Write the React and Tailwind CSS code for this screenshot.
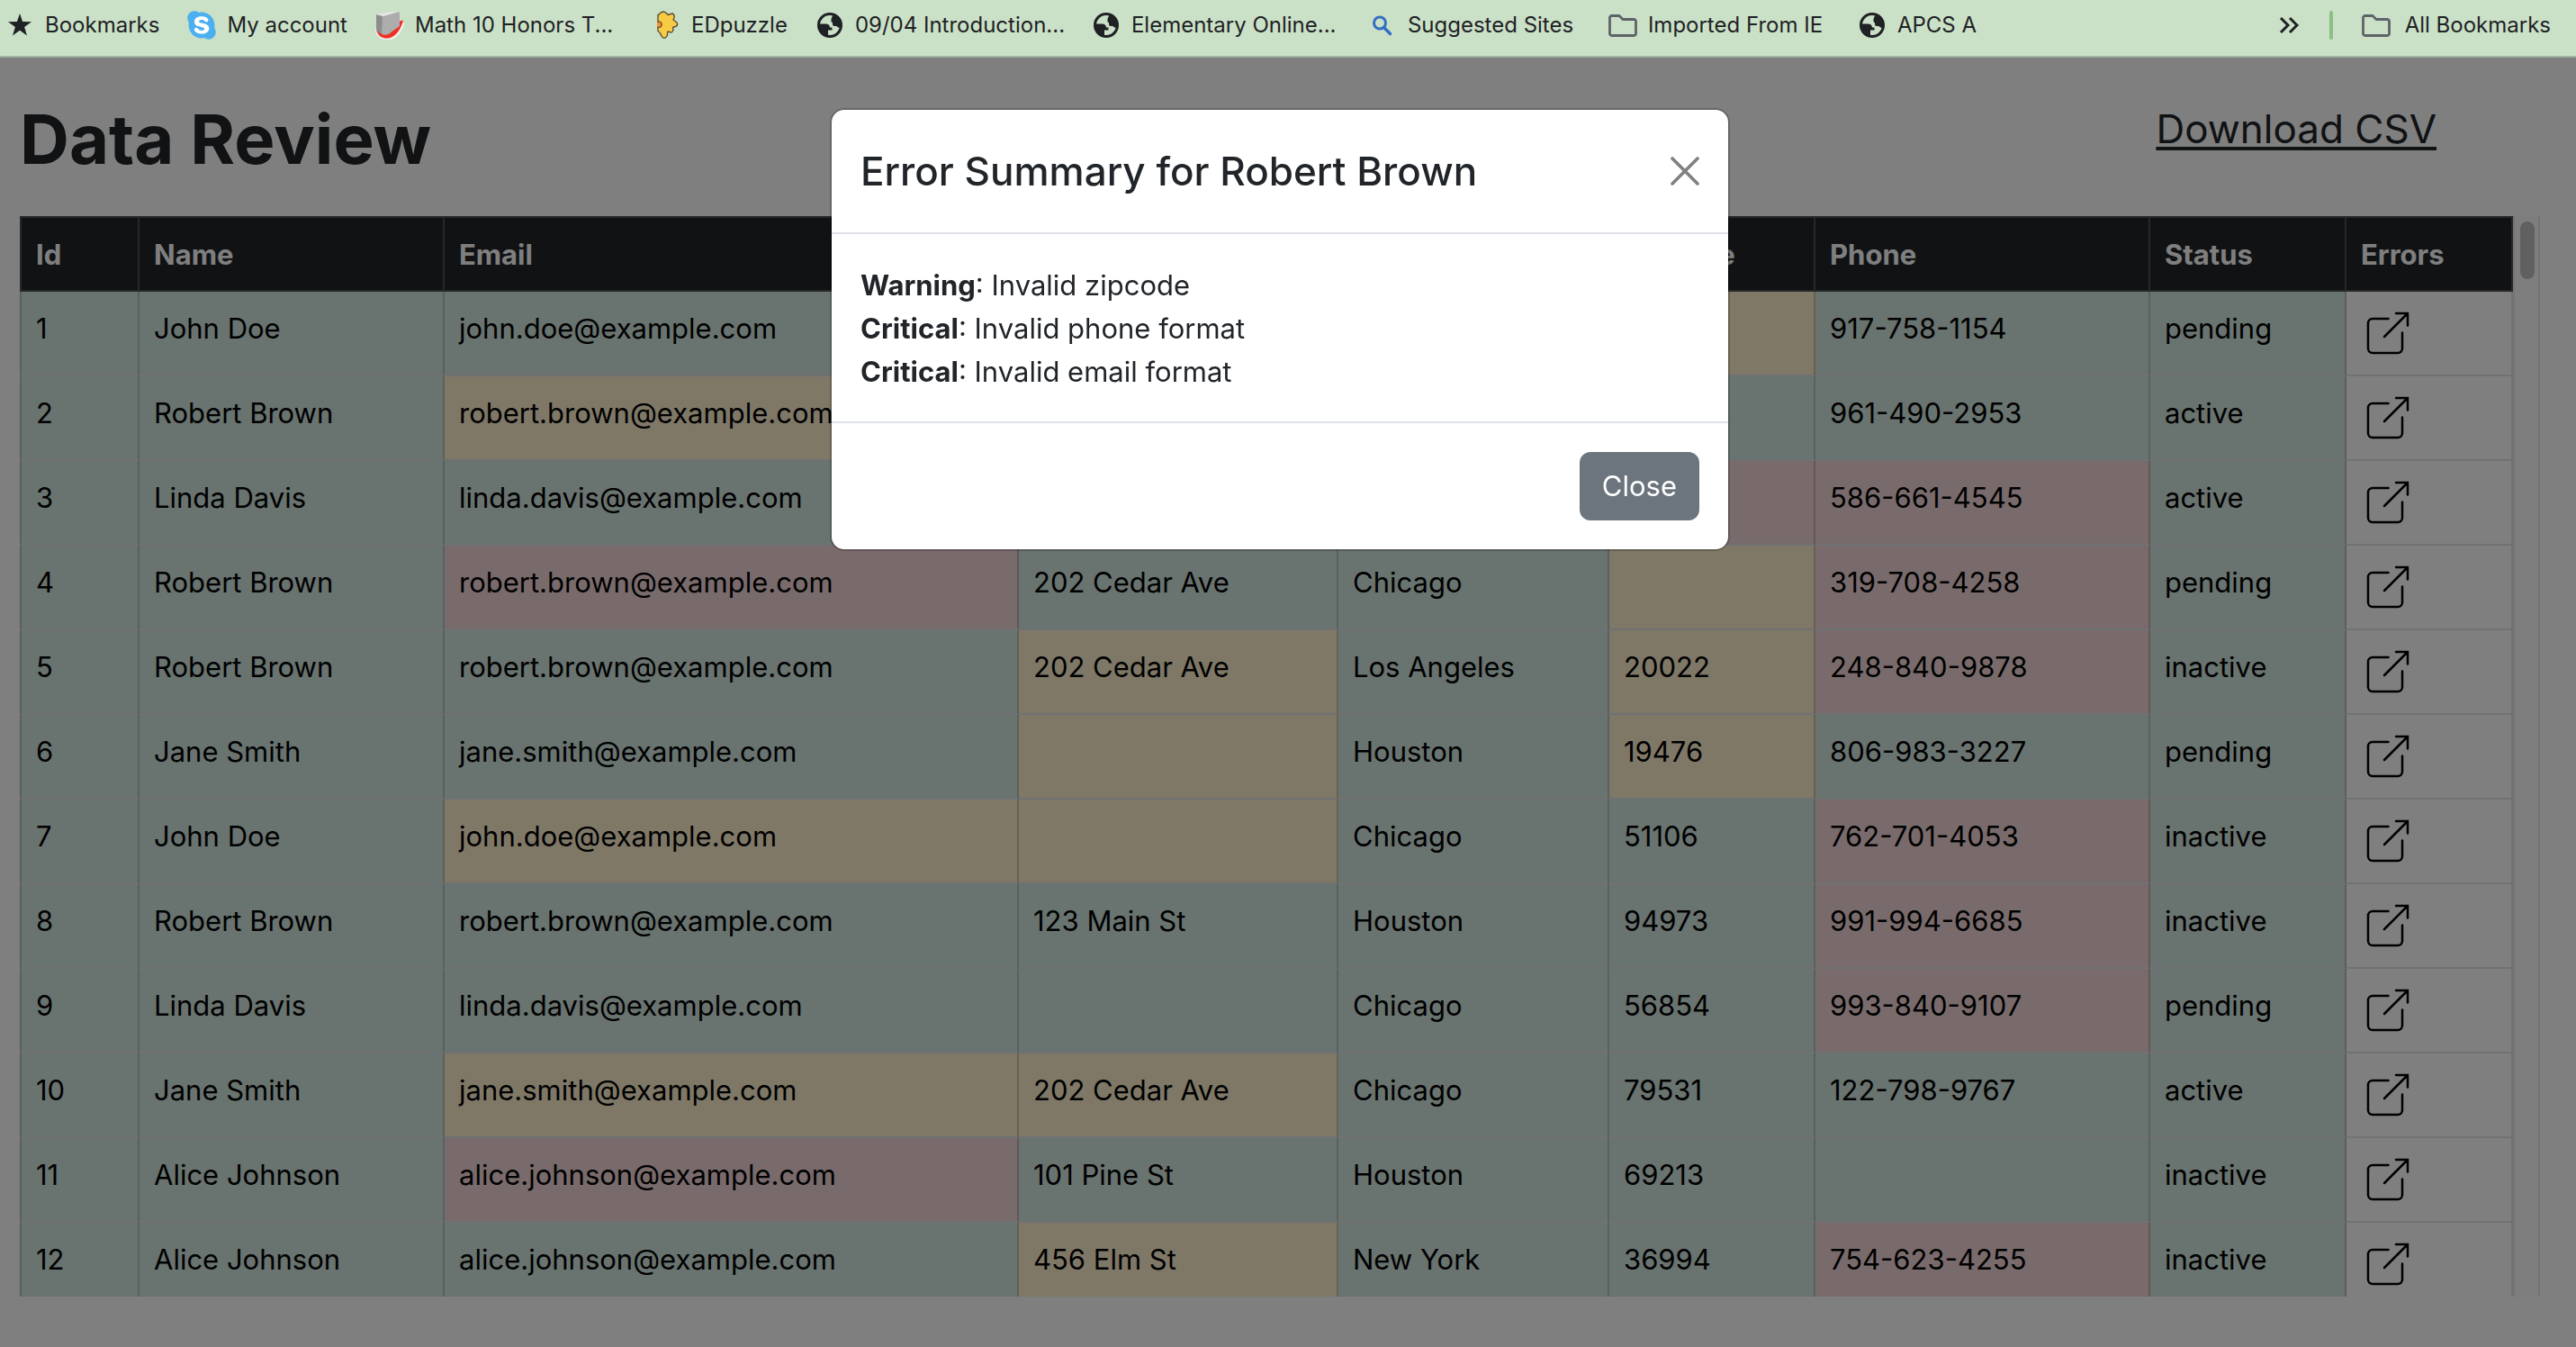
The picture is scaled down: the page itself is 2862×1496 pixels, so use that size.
import React from "react";
import { FaSkype } from "react-icons/fa";

const COLUMNS = [
  { label: "Id", width: "w-[133px]" },
  { label: "Name", width: "w-[339px]" },
  { label: "Email", width: "w-[638px]" },
  { label: "Address", width: "w-[355px]" },
  { label: "City", width: "w-[301px]" },
  { label: "Zipcode", width: "w-[229px]" },
  { label: "Phone", width: "w-[372px]" },
  { label: "Status", width: "w-[218px]" },
  { label: "Errors", width: "w-[185px]" },
];

// Severity marks per row: keys are column positions, w = warning, d = critical.
const ROWS = [
  { cells: ["1", "John Doe", "john.doe@example.com", "", "", "", "917-758-1154", "pending"], marks: { 5: "w" } },
  { cells: ["2", "Robert Brown", "robert.brown@example.com", "", "", "", "961-490-2953", "active"], marks: { 2: "w" } },
  { cells: ["3", "Linda Davis", "linda.davis@example.com", "", "", "", "586-661-4545", "active"], marks: { 5: "d", 6: "d" } },
  { cells: ["4", "Robert Brown", "robert.brown@example.com", "202 Cedar Ave", "Chicago", "", "319-708-4258", "pending"], marks: { 2: "d", 5: "w", 6: "d" } },
  { cells: ["5", "Robert Brown", "robert.brown@example.com", "202 Cedar Ave", "Los Angeles", "20022", "248-840-9878", "inactive"], marks: { 3: "w", 5: "w", 6: "d" } },
  { cells: ["6", "Jane Smith", "jane.smith@example.com", "", "Houston", "19476", "806-983-3227", "pending"], marks: { 3: "w", 5: "w" } },
  { cells: ["7", "John Doe", "john.doe@example.com", "", "Chicago", "51106", "762-701-4053", "inactive"], marks: { 2: "w", 3: "w", 6: "d" } },
  { cells: ["8", "Robert Brown", "robert.brown@example.com", "123 Main St", "Houston", "94973", "991-994-6685", "inactive"], marks: { 6: "d" } },
  { cells: ["9", "Linda Davis", "linda.davis@example.com", "", "Chicago", "56854", "993-840-9107", "pending"], marks: { 6: "d" } },
  { cells: ["10", "Jane Smith", "jane.smith@example.com", "202 Cedar Ave", "Chicago", "79531", "122-798-9767", "active"], marks: { 2: "w", 3: "w" } },
  { cells: ["11", "Alice Johnson", "alice.johnson@example.com", "101 Pine St", "Houston", "69213", "", "inactive"], marks: { 2: "d" } },
  { cells: ["12", "Alice Johnson", "alice.johnson@example.com", "456 Elm St", "New York", "36994", "754-623-4255", "inactive"], marks: { 3: "w", 6: "d" } },
];

const TONES = {
  ok: "bg-[#d3e6df] border-x-[#b3c3bb]",
  w: "bg-[#fff1cf] border-x-[#ccc2a4]",
  d: "bg-[#f3d7d9] border-x-[#c6acae]",
};

function Star() {
  return (
    <svg viewBox="0 0 32 32" className="size-8" aria-hidden="true">
      <path fill="#1f2125" d="M16 3l3.1 9.1 9.9.1-7.900 5.800 2.900 9.600-8-5.800-8 5.800 2.900-9.600L3 12.200l9.900-.1z" />
    </svg>
  );
}

function Skype() {
  return (
    <svg viewBox="0 0 32 32" className="size-8" aria-hidden="true">
      <circle cx="16" cy="16" r="11" fill="#fff" />
      <FaSkype x="-2" y="-2" size={36} color="#4cb0f0" />
    </svg>
  );
}

function Book() {
  return (
    <svg viewBox="0 0 32 32" className="size-8" aria-hidden="true">
      <path d="M2 20c1 7 6 10 12 10 8 0 13-8 16-17" fill="none" stroke="#f3f1ef" strokeWidth="5" />
      <path d="M1 21c2 7 6 9.500 12 9.500 8 0 15-8 18-20l-4 1-6 9z" fill="#ee3124" />
      <path d="M1 4l8 2-1 20c-4-1-6-3-7-6z" fill="#8d8d8d" />
      <path d="M8 5l17-4 2 1v15c-4 3-9 6-12 9-3 1-6 1-8 0z" fill="#adadad" />
      <path d="M1 4L18 1l8 0-17 5z" fill="#e6e6e6" />
    </svg>
  );
}

function Puzzle() {
  return (
    <svg viewBox="0 0 32 32" className="size-8" aria-hidden="true">
      <path
        d="M7 4.500c2-.5 3-3.500 6-3.500s3.500 2 5 3.500l5-1.500c2 1 2.500 3 2 5l-1 2 4 3c1 2 1 3-.5 4l-4 1.500c1 3 0 5.500-2 5.500l-3.500-1c-1 2 0 3.500-1 5-1.500 3-4.500 3-6 0-1-2-1.500-4-4-5.500V18c3 1 4-1 4-3s-1-3-4-3z"
        fill="#f8cb45"
        stroke="#5b5238"
        strokeWidth="1.400"
        strokeLinejoin="round"
      />
      <path d="M6 12c4 0 5 1 5 3.500S9 19 6 18" fill="#ef9436" stroke="#8a4a1d" strokeWidth="1.200" />
    </svg>
  );
}

function Globe() {
  return (
    <svg viewBox="-2 -2 32 32" className="size-8" aria-hidden="true">
      <circle cx="14" cy="14" r="12.500" fill="none" stroke="#1f2125" strokeWidth="3" />
      <path fill="#1f2125" d="M17 3.500L15.500 7v2.500c0 .8.700 1.500 1.500 1.500v2c0 1.200 1 2 2 2h2.500l1.500 1.500 3.500.5 1-3.500C27 8 23 4 17 2.500z" />
      <path fill="#1f2125" d="M1.500 12.500h8c2.500 0 4.500 1.500 4.500 4h2.500v3H12V25.500L9 26C4.500 24 1.500 19 1.500 14z" />
    </svg>
  );
}

function Search() {
  return (
    <svg viewBox="0 0 32 32" className="size-8" aria-hidden="true">
      <circle cx="13" cy="13.500" r="6.500" fill="none" stroke="#3370c4" strokeWidth="3" />
      <path d="M17.500 18.500l7 7" stroke="#3370c4" strokeWidth="3.500" strokeLinecap="round" />
    </svg>
  );
}

function Folder() {
  return (
    <svg viewBox="0 0 32 32" className="size-8" aria-hidden="true">
      <path
        d="M3.500 5.500H12l4 4h12.500c1 0 2 1 2 2v14c0 1-1 2-2 2h-25c-1 0-2-1-2-2v-18c0-1 1-2 2-2z"
        fill="none"
        stroke="#5f6368"
        strokeWidth="2.800"
        strokeLinejoin="round"
      />
    </svg>
  );
}

function OpenIcon() {
  return (
    <svg
      viewBox="0 0 48 48"
      className="size-12"
      fill="none"
      stroke="#000"
      strokeWidth="2.500"
      strokeLinecap="round"
      strokeLinejoin="miter"
      aria-hidden="true"
    >
      <path d="M24.500 8H7a5 5 0 0 0-5 5v28a5 5 0 0 0 5 5h28a5 5 0 0 0 5-5V23.500" />
      <path d="M20 28L46 2M33 2h13v13.500" />
    </svg>
  );
}

const BOOKMARKS = [
  { icon: Star, label: "Bookmarks" },
  { icon: Skype, label: "My account" },
  { icon: Book, label: "Math 10 Honors T...", width: "w-[232px]" },
  { icon: Puzzle, label: "EDpuzzle" },
  { icon: Globe, label: "09/04 Introduction...", width: "w-[232px]" },
  { icon: Globe, label: "Elementary Online...", width: "w-[232px]" },
  { icon: Search, label: "Suggested Sites", width: "w-[192px]" },
  { icon: Folder, label: "Imported From IE", width: "w-[202px]" },
  { icon: Globe, label: "APCS A" },
];

function Bookmark({ icon: Icon, label, width = "", gap = "gap-3" }) {
  return (
    <a href="#" className={`flex items-center whitespace-nowrap ${gap}`}>
      <Icon />
      <span className={width}>{label}</span>
    </a>
  );
}

function BookmarkBar() {
  return (
    <nav className="relative z-20 flex h-16 items-center justify-between border-b-2 border-[#9fb39f] bg-[#cae1c7] pb-[6px] pl-[6px] pr-7 text-[24px] leading-8 text-[#1f2125]">
      <div className="flex items-center gap-[31px]">
        {BOOKMARKS.map((b) => (
          <Bookmark key={b.label} {...b} />
        ))}
      </div>
      <div className="flex items-center gap-8">
        <button type="button" aria-label="More bookmarks">
          <svg viewBox="0 0 24 24" className="size-6" fill="none" stroke="#1f2125" strokeWidth="3" aria-hidden="true">
            <path d="M2 4l8 8-8 8M12 4l8 8-8 8" />
          </svg>
        </button>
        <span className="h-8 w-1 rounded-full bg-[#8cc084]" />
        <Bookmark icon={Folder} label="All Bookmarks" gap="gap-4" />
      </div>
    </nav>
  );
}

function DataTable() {
  return (
    <div className="ml-[22px] mr-10 flex h-[calc(100vh-296px)] overflow-hidden">
      <div className="min-w-0 flex-1">
        <table className="w-full table-fixed border-separate border-spacing-0 text-left text-[31px] leading-[48px] text-black">
          <thead>
            <tr>
              {COLUMNS.map((c, i) => (
                <th
                  key={c.label}
                  scope="col"
                  className={`${c.width} border-y-2 border-r-2 border-[#4d5154] bg-[#212529] px-4 pt-[17px] pb-[15px] font-bold text-white ${i === 0 ? "border-l-2" : ""}`}
                >
                  {c.label}
                </th>
              ))}
            </tr>
          </thead>
          <tbody>
            {ROWS.map((row) => (
              <tr key={row.cells[0]}>
                {row.cells.map((text, i) => (
                  <td
                    key={i}
                    className={`h-[94px] border-r-2 border-b-2 border-b-[#dee2e6] px-4 pt-[17px] pb-0 align-top whitespace-nowrap ${TONES[row.marks[i] || "ok"]} ${i === 0 ? "border-l-2" : ""}`}
                  >
                    {text}
                  </td>
                ))}
                <td className="h-[94px] border-r-2 border-b-2 border-[#dee2e6] bg-white px-[22px] py-0">
                  <button type="button" aria-label={`Show errors for ${row.cells[1]}`} className="block">
                    <OpenIcon />
                  </button>
                </td>
              </tr>
            ))}
          </tbody>
        </table>
      </div>
      <div className="w-[30px] border-x-2 border-[#ebebeb] bg-[#fdfdfd] px-[6px] py-[6px]">
        <div className="h-16 w-4 rounded-full bg-[#c1c1c1]" />
      </div>
    </div>
  );
}

function ErrorDialog() {
  return (
    <div className="fixed inset-0 z-10 flex items-start justify-center bg-black/50 pt-[120px] pr-[18px]">
      <div
        role="dialog"
        aria-modal="true"
        aria-labelledby="error-title"
        className="w-full max-w-[1000px] rounded-2xl border-2 border-black/20 bg-white bg-clip-padding text-[31px] leading-[48px] text-[#212529]"
      >
        <div className="flex items-center justify-between border-b-2 border-[#dee2e6] p-8">
          <h2 id="error-title" className="text-[44px] font-medium leading-[72px]">
            Error Summary for Robert Brown
          </h2>
          <button type="button" aria-label="Close dialog">
            <svg viewBox="0 0 32 32" className="size-8" stroke="#808080" strokeWidth="3.600" strokeLinecap="round" aria-hidden="true">
              <path d="M2 2l28 28M30 2L2 30" />
            </svg>
          </button>
        </div>
        <div className="px-8 pt-[33px] pb-[31px]">
          <p><strong>Warning</strong>: Invalid zipcode</p>
          <p><strong>Critical</strong>: Invalid phone format</p>
          <p><strong>Critical</strong>: Invalid email format</p>
        </div>
        <div className="flex justify-end border-t-2 border-[#dee2e6] p-8">
          <button type="button" className="h-[76px] rounded-xl bg-[#6c757d] px-[25px] text-white">
            Close
          </button>
        </div>
      </div>
    </div>
  );
}

export default function App() {
  return (
    <div className="h-screen overflow-hidden bg-white font-['Inter',sans-serif] text-[#212529]">
      <BookmarkBar />
      <main>
        <header className="flex items-start justify-between pt-[42px] pb-[38px] pl-[22px] pr-[155px]">
          <h1 className="text-[76px] font-bold leading-[96px]">Data Review</h1>
          <a href="#" className="pt-1 text-[44px] leading-[66px] underline decoration-4 underline-offset-4">
            Download CSV
          </a>
        </header>
        <DataTable />
      </main>
      <ErrorDialog />
    </div>
  );
}
